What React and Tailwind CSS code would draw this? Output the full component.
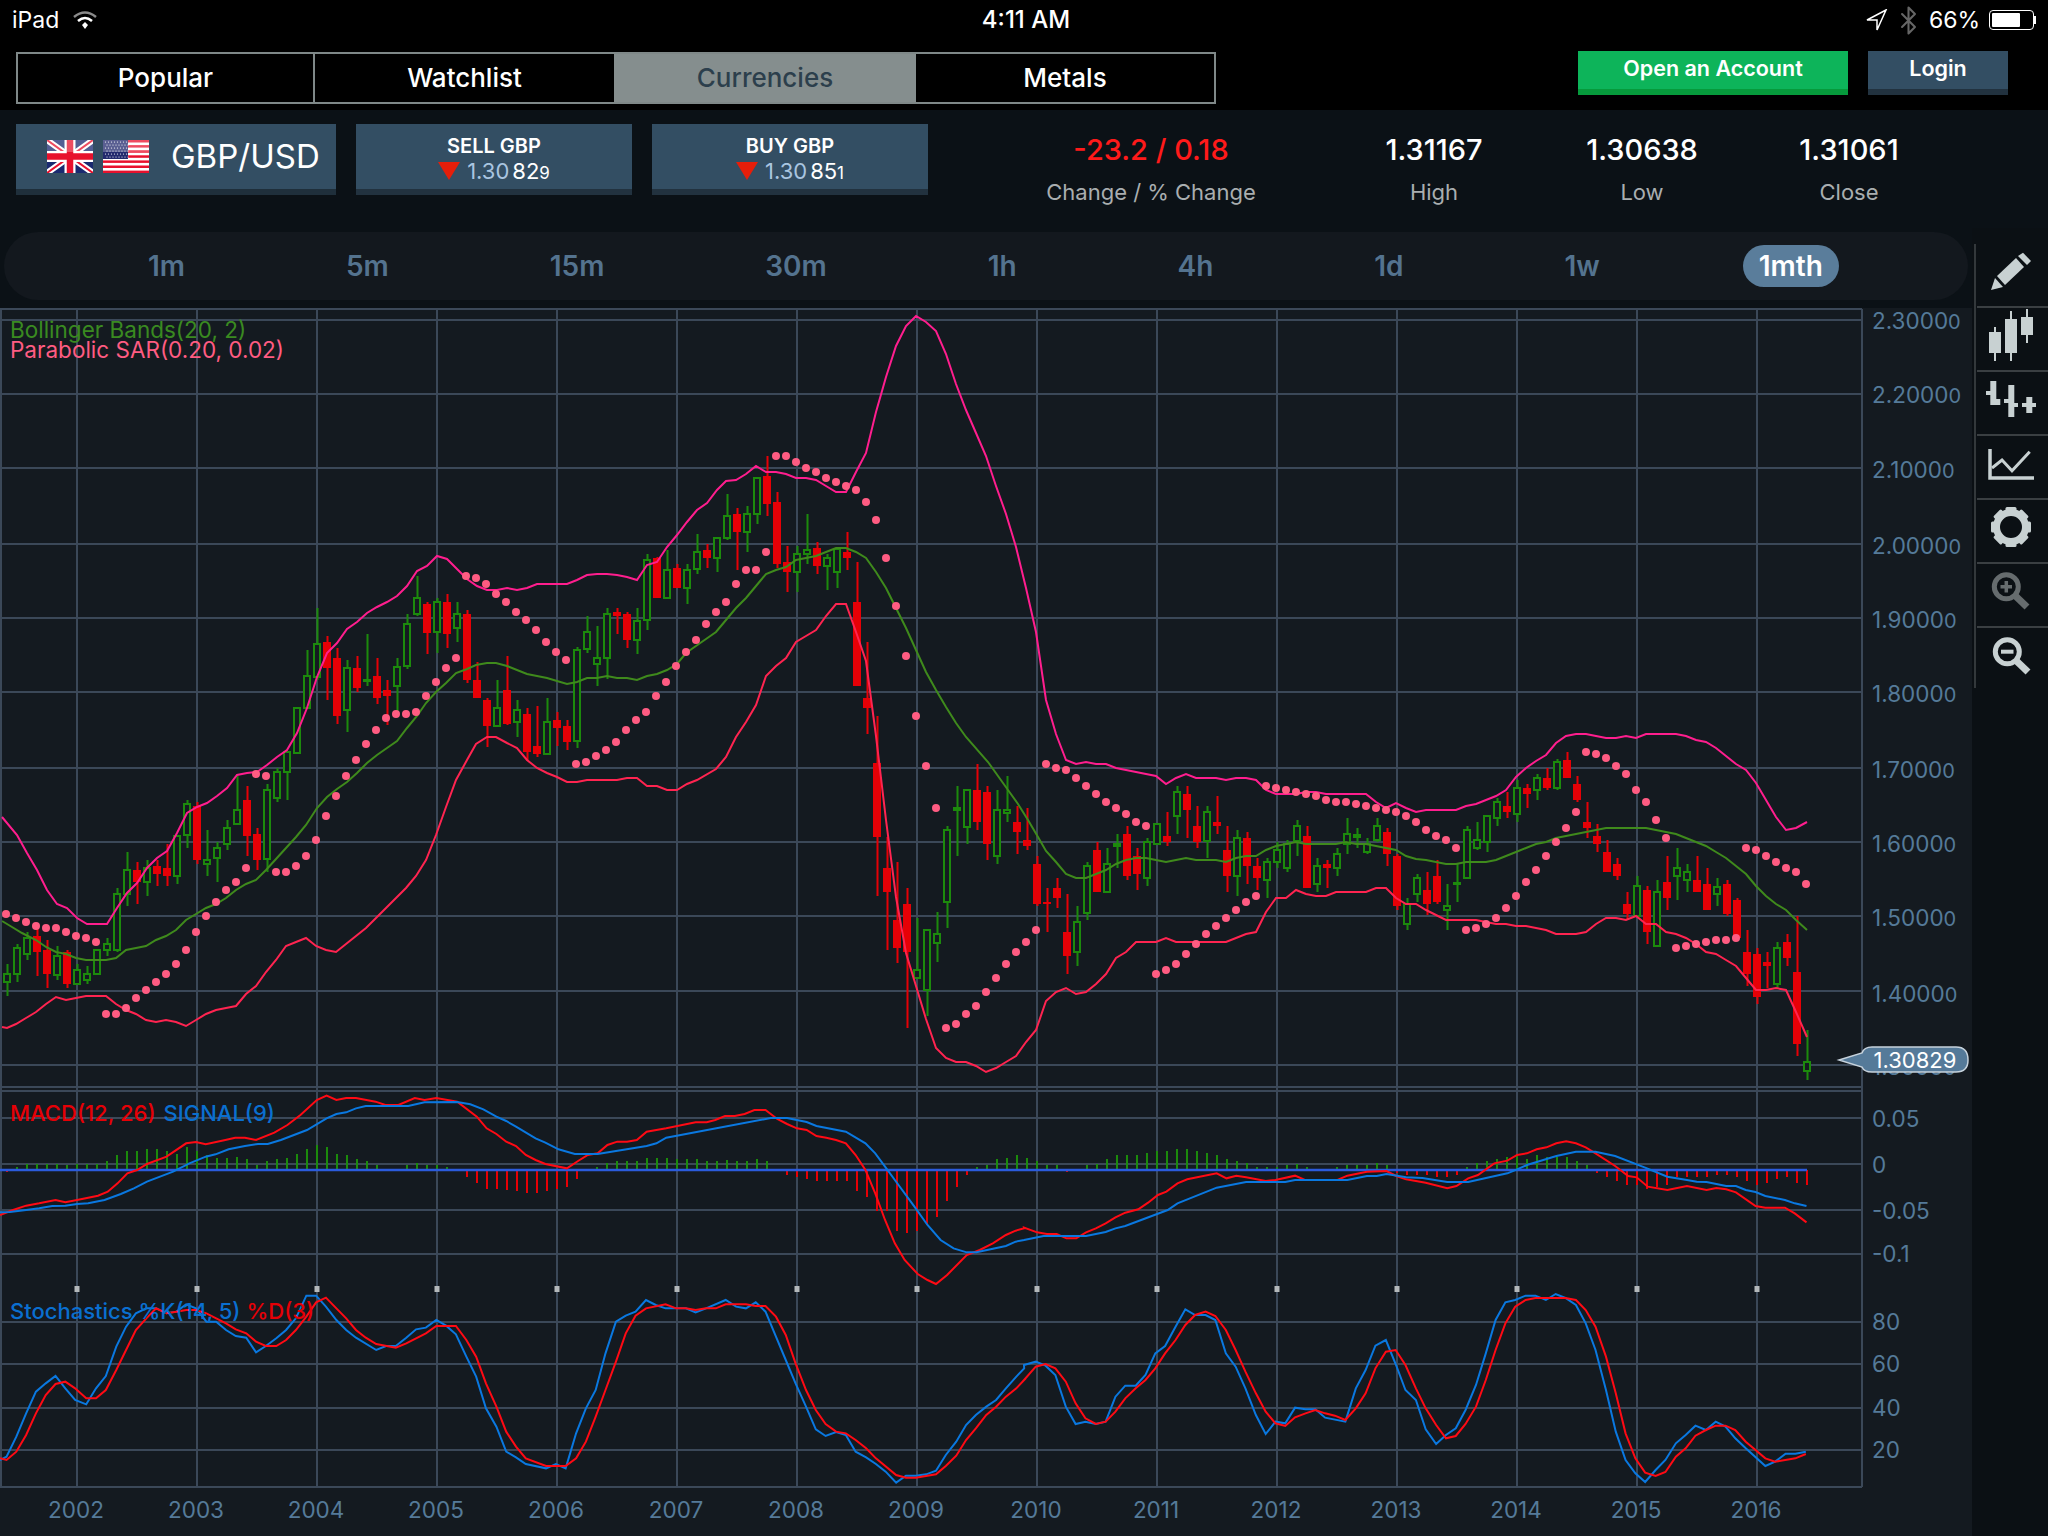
import { Bluetooth } from "lucide-react";

// candles: [red?, wick top, body top, body bottom, wick bottom], one per month, x = 7 + 10 * i
const candles = [
    [0,964,973,983,996],[0,944,947,975,982],[0,932,937,955,960],[1,929,936,952,976],[1,940,950,974,988],
    [0,946,955,976,980],[1,950,952,984,988],[0,964,969,985,985],[0,966,973,981,984],[0,949,949,975,975],
    [0,938,943,951,956],[0,888,893,951,952],[0,852,869,895,906],[1,862,870,882,904],[0,860,867,883,896],
    [1,860,866,874,886],[1,844,868,876,886],[0,835,835,877,884],[0,800,803,836,848],[1,802,806,860,864],
    [0,830,859,865,876],[0,842,847,859,882],[0,820,827,845,850],[0,776,809,825,825],[1,786,800,836,856],
    [1,828,834,860,870],[0,784,789,860,872],[0,768,771,799,802],[0,751,751,773,800],[0,707,707,754,754],
    [0,650,675,709,709],[0,608,643,678,680],[1,636,642,668,700],[1,648,658,716,724],[0,660,667,711,732],
    [1,656,668,688,692],[0,634,679,681,686],[1,658,676,698,704],[1,680,690,696,725],[0,658,666,687,712],
    [0,614,623,667,669],[0,576,597,615,616],[1,602,604,633,654],[0,598,601,633,653],[1,594,602,634,648],
    [0,602,613,629,642],[1,610,614,680,683],[1,662,680,698,698],[1,698,700,726,747],[0,680,707,727,727],
    [1,656,690,724,725],[0,700,709,723,737],[1,708,714,752,761],[1,706,746,754,757],[0,698,721,755,755],
    [1,712,720,728,746],[1,720,726,742,750],[0,647,649,742,748],[0,616,631,650,653],[0,626,657,665,686],
    [0,608,613,659,679],[1,608,612,616,634],[1,612,614,640,648],[0,608,620,641,654],[0,554,559,621,630],
    [1,557,558,598,598],[0,550,569,599,599],[1,564,568,588,588],[0,564,569,589,604],[0,534,551,570,574],
    [1,544,550,558,568],[0,537,537,559,572],[0,494,515,539,540],[1,508,514,532,570],[0,506,513,533,552],
    [0,477,477,515,524],[1,456,476,504,516],[1,492,502,564,568],[1,546,562,572,592],[0,546,553,573,592],
    [0,514,549,555,564],[1,542,548,566,574],[0,554,557,567,590],[0,547,548,573,588],[1,532,552,558,570],
    [1,562,602,686,686],[1,642,698,708,734],[1,716,763,837,896],[1,837,868,892,950],[1,862,920,948,963],
    [1,888,904,952,1028],[0,918,969,979,979],[0,929,929,991,1016],[0,912,933,944,962],[0,826,829,903,928],
    [0,786,807,811,856],[0,789,789,828,844],[1,764,790,822,830],[1,786,792,844,860],[0,790,809,857,864],
    [0,776,809,814,822],[1,806,822,832,854],[1,808,840,846,850],[1,856,864,904,906],[1,888,902,904,932],
    [1,878,888,898,908],[1,894,932,956,974],[0,906,921,953,966],[0,862,865,914,920],[1,842,850,892,892],
    [0,848,863,893,893],[0,834,843,847,868],[1,826,834,876,880],[1,848,856,874,890],[0,838,841,879,886],
    [0,823,823,845,845],[1,812,836,842,846],[0,786,791,817,834],[1,786,794,810,838],[1,806,826,842,848],
    [0,806,811,842,858],[1,796,822,826,834],[1,826,850,876,892],[0,830,837,877,896],[1,832,838,866,884],
    [1,858,866,878,890],[0,858,861,881,898],[0,842,849,863,868],[0,840,843,869,872],[0,820,825,842,856],
    [1,826,836,888,888],[0,858,865,885,892],[1,860,864,868,888],[0,848,853,869,876],[0,818,833,845,854],
    [0,828,834,838,848],[0,838,843,853,854],[0,818,825,841,842],[1,828,832,854,866],[1,854,856,906,910],
    [0,898,903,925,930],[0,874,877,895,902],[1,872,890,904,915],[1,860,876,902,904],[0,884,905,911,930],
    [0,863,882,883,902],[0,826,829,879,879],[0,822,839,849,850],[0,815,815,843,852],[0,798,801,819,826],
    [1,792,806,812,818],[0,780,787,815,822],[1,784,788,794,808],[0,774,777,791,800],[1,768,778,788,790],
    [0,759,761,789,790],[1,752,760,778,778],[1,776,784,800,802],[1,802,822,828,838],[1,824,836,844,852],
    [1,840,852,872,872],[1,858,864,876,880],[1,892,904,914,920],[0,876,885,917,917],[1,886,890,932,944],
    [0,880,891,947,947],[1,856,882,898,910],[0,848,867,877,900],[0,864,871,881,892],[1,856,880,892,892],
    [1,868,884,910,910],[0,878,886,895,906],[1,880,884,914,916],[1,898,900,938,938],[1,930,952,974,986],
    [1,948,954,997,1004],[1,952,962,966,988],[0,942,947,985,989],[1,934,942,958,966],[1,916,972,1044,1056],
    [0,1030,1061,1072,1080],
];

const upper = [
    [2,817],[17,835],[27,853],[37,870],[47,890],[57,904],[67,908],[77,918],[87,924],[107,924],[117,908],[127,893],[137,883],[147,868],
    [157,858],[167,851],[177,833],[187,813],[197,807],[207,803],[217,796],[227,788],[237,775],[247,773],[257,772],[267,765],[277,757],
    [287,750],[297,733],[307,708],[317,677],[327,653],[337,643],[347,629],[357,622],[367,613],[377,607],[387,602],[397,596],[407,586],
    [417,571],[427,566],[437,556],[447,559],[457,569],[467,579],[477,586],[487,590],[497,590],[507,588],[517,590],[527,588],[537,584],
    [567,584],[577,580],[587,575],[597,574],[607,574],[617,575],[627,577],[637,580],[647,565],[657,562],[667,547],[677,535],[687,522],
    [697,510],[707,503],[717,490],[726,481],[736,480],[746,474],[756,466],[766,472],[776,472],[786,474],[796,478],[806,478],[816,480],
    [826,486],[836,492],[846,492],[856,472],[866,453],[876,412],[886,377],[896,346],[906,326],[916,316],[926,322],[936,331],[946,354],
    [956,384],[966,410],[976,433],[986,456],[996,486],[1006,514],[1016,547],[1026,588],[1036,632],[1046,700],[1056,734],[1066,760],
    [1076,764],[1086,762],[1096,764],[1106,764],[1116,768],[1126,770],[1136,772],[1146,774],[1156,776],[1166,784],[1176,778],[1186,774],
    [1196,778],[1216,778],[1226,780],[1236,778],[1246,778],[1256,780],[1266,790],[1276,794],[1296,794],[1306,792],[1316,792],[1326,794],
    [1366,794],[1376,802],[1386,808],[1396,803],[1406,808],[1416,812],[1426,810],[1456,810],[1466,806],[1476,804],[1486,800],[1496,796],
    [1506,790],[1516,777],[1526,768],[1536,761],[1546,755],[1556,743],[1566,736],[1576,734],[1586,734],[1596,736],[1606,738],[1616,738],
    [1626,736],[1636,738],[1646,734],[1676,734],[1686,736],[1696,740],[1706,742],[1716,748],[1726,756],[1736,764],[1746,770],[1756,783],
    [1766,800],[1776,817],[1786,830],[1796,828],[1807,822],
];

const middle = [
    [2,921],[12,927],[22,933],[36,940],[46,947],[56,952],[66,954],[76,958],[86,960],[106,960],[116,958],[126,950],[136,948],[146,946],
    [156,940],[166,936],[176,930],[186,920],[196,914],[206,908],[216,904],[226,898],[236,890],[246,884],[256,880],[266,870],[276,859],
    [286,848],[296,837],[306,825],[317,808],[327,797],[337,789],[347,782],[357,773],[367,763],[377,755],[387,748],[397,741],[407,728],
    [417,716],[426,703],[436,692],[446,683],[456,673],[467,669],[476,665],[487,663],[496,663],[507,666],[517,670],[527,674],[537,676],
    [547,678],[557,681],[567,684],[577,682],[587,678],[597,678],[607,676],[617,678],[627,678],[637,680],[647,676],[657,674],[667,670],
    [677,664],[686,653],[696,646],[706,639],[716,632],[726,620],[736,608],[746,598],[756,586],[766,574],[776,570],[786,567],[796,560],
    [806,558],[816,556],[826,552],[836,548],[846,548],[856,552],[866,558],[876,572],[886,588],[896,608],[906,628],[916,650],[926,672],
    [936,690],[946,707],[956,723],[966,737],[988,762],[998,776],[1008,790],[1018,804],[1028,820],[1038,837],[1046,851],[1056,862],
    [1066,874],[1076,878],[1086,878],[1096,874],[1106,870],[1116,864],[1126,860],[1136,858],[1146,858],[1156,860],[1166,862],[1176,860],
    [1186,858],[1196,860],[1216,860],[1226,862],[1236,858],[1246,856],[1256,856],[1266,850],[1276,846],[1286,844],[1296,842],[1306,844],
    [1336,844],[1346,842],[1356,844],[1366,844],[1376,846],[1386,848],[1396,850],[1406,856],[1416,859],[1426,860],[1436,862],[1446,864],
    [1456,864],[1466,862],[1486,862],[1496,860],[1506,856],[1516,852],[1526,848],[1536,844],[1546,842],[1556,838],[1566,836],[1576,834],
    [1586,832],[1596,830],[1606,828],[1646,828],[1656,830],[1666,832],[1676,834],[1686,838],[1696,842],[1706,846],[1716,852],[1726,858],
    [1736,866],[1746,874],[1756,886],[1766,896],[1776,904],[1786,910],[1796,920],[1807,930],
];

const lower = [
    [2,1027],[7,1028],[16,1024],[26,1018],[36,1012],[46,1004],[56,997],[66,1000],[76,998],[86,996],[106,996],[116,1004],[126,1010],
    [136,1014],[146,1020],[156,1022],[166,1020],[176,1022],[186,1026],[196,1020],[206,1014],[216,1010],[226,1008],[236,1006],[246,994],
    [256,986],[266,972],[276,960],[286,946],[296,942],[306,938],[316,946],[326,950],[336,952],[346,944],[356,936],[366,928],[376,918],
    [386,908],[396,898],[406,888],[416,876],[426,860],[436,835],[446,807],[456,780],[467,760],[476,744],[487,737],[496,737],[507,743],
    [517,748],[527,760],[537,768],[547,773],[557,777],[567,782],[577,782],[587,780],[617,780],[627,778],[637,778],[647,786],[657,786],
    [667,790],[677,790],[687,784],[697,780],[716,769],[726,757],[736,737],[746,722],[756,705],[766,676],[776,666],[786,658],[796,642],
    [806,636],[816,630],[826,616],[836,604],[846,604],[856,632],[866,661],[876,736],[886,820],[896,897],[906,953],[916,986],[926,1019],
    [936,1048],[946,1058],[956,1062],[966,1062],[976,1066],[986,1072],[996,1068],[1006,1062],[1016,1056],[1026,1042],[1036,1030],
    [1046,1001],[1056,992],[1066,988],[1076,994],[1086,992],[1096,984],[1106,974],[1116,958],[1126,952],[1136,942],[1156,942],[1166,938],
    [1176,942],[1226,942],[1236,938],[1246,934],[1256,932],[1266,912],[1276,898],[1286,898],[1296,890],[1306,894],[1316,896],[1326,896],
    [1336,892],[1366,892],[1376,888],[1386,888],[1396,898],[1406,904],[1416,904],[1426,910],[1436,915],[1446,920],[1476,920],[1486,922],
    [1496,924],[1506,924],[1516,926],[1526,926],[1536,928],[1546,930],[1556,934],[1576,934],[1586,932],[1596,924],[1606,918],[1616,918],
    [1626,920],[1636,916],[1646,924],[1656,924],[1666,932],[1676,934],[1686,938],[1696,944],[1706,952],[1716,954],[1726,960],[1736,966],
    [1746,978],[1756,990],[1766,990],[1776,988],[1786,990],[1796,1012],[1807,1037],
];

// parabolic sar, x = 6 + 10 * i
const sar = [
    914,918,922,926,928,928,932,936,938,942,
    1014,1014,1008,998,990,982,974,964,950,932,916,902,890,882,868,774,776,872,872,866,856,840,
    816,796,776,760,744,730,718,714,714,712,696,682,668,658,
    576,578,584,594,602,612,620,630,642,652,660,
    764,762,756,750,742,730,720,712,696,682,666,652,640,624,612,602,584,570,570,552,
    456,456,462,468,472,478,482,486,490,502,520,558,606,656,716,766,808,
    1028,1024,1014,1006,992,978,964,952,942,930,
    764,768,770,778,786,794,802,808,814,822,826,
    974,970,964,954,944,934,926,918,910,902,896,
    786,788,790,792,794,796,800,802,802,804,806,808,810,812,816,822,830,836,840,848,
    930,928,924,918,908,896,882,870,856,842,828,812,
    752,754,758,766,774,790,802,820,838,
    948,946,944,942,940,940,938,
    848,850,856,862,868,872,884,
];

// macd histogram in px from the zero line, same x as the candles
const hist = [
    -2,3,6,6,6,6,5,6,6,6,9,15,19,19,21,21,19,16,23,19,15,12,12,13,11,5,9,11,12,16,21,25,23,16,15,11,9,5,0,0,
    5,7,5,5,3,0,-7,-13,-19,-19,-20,-21,-23,-23,-21,-19,-17,-9,0,3,7,9,9,9,12,12,12,11,11,11,9,9,10,9,9,11,9,0,
    -5,-7,-9,-11,-11,-11,-11,-21,-27,-41,-41,-61,-63,-61,-55,-47,-31,-17,-5,3,5,11,12,15,12,9,5,5,-2,0,5,6,11,15,
    15,15,17,19,19,21,21,19,17,15,11,9,7,3,3,3,5,6,3,0,0,3,5,5,5,7,5,-3,-5,-5,-5,-7,-7,-5,3,7,9,11,13,15,11,15,13,13,13,9,5,
    -3,-7,-11,-15,-15,-19,-17,-15,-7,-7,-7,-7,-5,-5,-7,-11,-15,-13,-9,-7,-13,-15,
];

const macdA = [[0,465],[20,450],[40,437],[60,430],[85,420],[100,427],[118,420],[150,407],[165,395],[180,370],[195,340],[210,330],[225,312],[255,290],[285,250],[300,246],[315,253],[345,240],[360,233],[375,233],[392,240],[420,218],[440,195],[460,165],[485,120],[500,107],[515,120],[530,114],[545,114],[575,125],[590,135],[610,135],[635,114],[650,120],[668,114],[700,125],[730,170],[745,205],[760,222],[775,245],[790,258],[805,285],[820,300],[835,312],[868,325],[885,303],[900,285],[915,280],[930,255],[945,245],[960,245],[975,240],[990,215],[1020,205],[1065,187],[1082,187],[1095,180],[1110,168],[1125,168],[1140,162],[1155,150],[1172,150],[1190,177],[1205,192],[1220,205],[1235,210],[1250,228],[1265,233],[1280,240],[1295,250],[1310,285],[1325,330],[1340,400],[1355,480],[1370,550],[1385,600],[1405,642],[1420,660],[1433,672],[1450,645],[1480,585],[1500,570],[1520,550],[1540,525],[1555,512],[1568,505]];
const macdB = [[0,503],[20,517],[35,522],[50,522],[65,535],[80,535],[95,517],[110,505],[125,490],[140,472],[155,458],[175,448],[190,428],[205,405],[218,395],[235,370],[250,358],[265,352],[295,340],[310,355],[325,347],[340,352],[370,363],[385,360],[415,347],[430,360],[480,360],[495,347],[525,335],[555,333],[570,348],[585,358],[615,368],[648,385],[662,378],[680,355],[695,345],[720,310],[740,302],[755,285],[770,280],[785,268],[800,262],[815,250],[830,244],[845,250],[860,262],[875,280],[905,318],[925,348],[938,352],[955,380],[985,390],[1015,378],[1045,390],[1060,384],[1075,388],[1090,397],[1120,438],[1135,443],[1165,443],[1180,460],[1198,487]];
const signalA = [[0,457],[15,456],[40,450],[60,445],[80,438],[100,437],[118,432],[135,430],[160,420],[185,402],[205,385],[225,365],[265,335],[290,310],[315,290],[330,283],[350,268],[375,258],[395,252],[410,252],[430,240],[470,210],[500,175],[515,162],[530,157],[545,145],[560,138],[625,138],[650,127],[700,126],[720,133],[740,148],[760,170],[775,183],[790,200],[820,235],[835,248],[855,268],[880,282],[915,282],[990,258],[1005,250],[1020,233],[1180,174],[1205,174],[1235,186],[1250,198],[1295,215],[1325,250],[1340,280],[1355,320],[1370,360],[1400,440],[1420,495],[1440,540],[1460,565],[1480,577],[1495,577],[1540,558],[1555,545],[1568,540]];
const signalB = [[0,540],[30,528],[95,528],[125,516],[140,505],[155,498],[220,450],[235,430],[295,383],[340,366],[400,366],[415,360],[495,360],[525,348],[540,348],[555,342],[585,352],[610,354],[648,366],[680,366],[740,340],[755,328],[770,315],[785,306],[815,288],[845,275],[875,275],[905,288],[950,322],[985,350],[1015,360],[1030,365],[1045,366],[1075,378],[1090,378],[1105,390],[1120,396],[1135,408],[1165,420],[1180,430],[1198,438]];
const stochKA = [[0,1200],[10,1190],[25,1130],[40,1060],[55,995],[70,970],[85,948],[100,985],[115,1020],[132,1033],[147,985],[162,948],[178,860],[193,800],[208,760],[224,745],[239,745],[255,760],[270,755],[285,733],[300,745],[316,785],[331,785],[346,810],[361,828],[377,833],[392,877],[407,858],[423,835],[438,810],[453,775],[469,707],[484,707],[499,740],[515,780],[530,810],[545,833],[576,870],[591,858],[606,858],[622,833],[637,808],[652,803],[668,780],[683,797],[698,823],[714,890],[729,950],[744,1045],[760,1100],[775,1175],[790,1192],[805,1212],[836,1225],[851,1212],[866,1225],[882,1120],[897,1045],[912,990],[927,880],[943,785],[958,767],[973,755],[989,720],[1004,735],[1019,745],[1050,745],[1065,757],[1081,745],[1111,720],[1127,740],[1142,745],[1157,727],[1172,755],[1188,830],[1203,900],[1218,970],[1234,1040],[1249,1108],[1264,1128],[1280,1116],[1295,1125],[1310,1175],[1326,1192],[1341,1212],[1356,1235],[1372,1268],[1387,1247],[1402,1247],[1418,1243],[1433,1232],[1448,1185],[1464,1145],[1479,1095],[1494,1065],[1510,1040],[1525,1020],[1540,985],[1556,950],[1568,925]];
const stochDA = [[0,1195],[10,1200],[25,1175],[40,1125],[55,1060],[70,1005],[85,972],[100,965],[115,985],[132,1015],[147,1015],[162,990],[178,930],[193,870],[208,810],[224,775],[239,745],[255,760],[270,755],[285,750],[300,750],[316,760],[331,775],[346,790],[361,808],[377,820],[392,845],[407,858],[423,858],[438,840],[453,810],[469,770],[484,727],[499,713],[515,745],[530,775],[545,810],[560,833],[576,852],[606,863],[622,850],[652,820],[668,798],[698,798],[714,840],[729,890],[744,970],[760,1040],[775,1115],[790,1160],[805,1195],[836,1218],[866,1218],[882,1195],[897,1145],[912,1070],[927,990],[943,905],[958,820],[973,767],[989,745],[1019,733],[1035,745],[1050,745],[1065,750],[1081,745],[1096,745],[1111,733],[1142,733],[1157,738],[1172,738],[1188,770],[1203,825],[1218,910],[1234,990],[1249,1050],[1264,1092],[1280,1115],[1295,1120],[1310,1140],[1326,1165],[1341,1195],[1372,1245],[1387,1253],[1402,1253],[1433,1243],[1448,1218],[1464,1187],[1479,1140],[1494,1105],[1510,1065],[1525,1040],[1540,1010],[1556,985],[1568,960]];
const stochKB = [[0,915],[18,905],[33,917],[48,945],[64,1040],[79,1092],[94,1085],[110,1092],[125,1085],[140,1010],[155,977],[171,977],[186,945],[201,880],[216,858],[232,800],[247,748],[262,765],[278,765],[293,780],[309,880],[324,920],[339,985],[355,1065],[370,1122],[385,1085],[400,1090],[415,1043],[431,1048],[446,1048],[461,1073],[492,1085],[508,985],[523,930],[538,857],[554,840],[569,912],[584,990],[600,1020],[615,1108],[631,1152],[646,1125],[661,1105],[676,1050],[692,975],[707,880],[722,780],[737,727],[752,720],[768,707],[783,707],[799,720],[814,702],[829,714],[845,735],[860,790],[875,870],[891,990],[906,1115],[921,1200],[936,1240],[951,1266],[967,1230],[982,1200],[998,1150],[1013,1125],[1028,1097],[1044,1110],[1059,1085],[1074,1100],[1089,1135],[1105,1165],[1135,1218],[1150,1205],[1166,1181],[1181,1181],[1197,1175]];
const stochDB = [[0,960],[18,920],[33,912],[48,925],[64,965],[79,1030],[94,1075],[110,1092],[125,1085],[140,1055],[155,1015],[171,985],[186,960],[201,925],[216,880],[232,840],[247,795],[262,765],[278,755],[293,768],[309,810],[324,870],[339,935],[355,1000],[370,1055],[385,1090],[400,1098],[415,1072],[431,1060],[446,1050],[461,1060],[476,1067],[492,1080],[508,1045],[523,1000],[538,925],[554,875],[569,870],[584,915],[600,985],[615,1045],[631,1095],[646,1135],[661,1128],[676,1092],[692,1040],[707,960],[722,870],[737,790],[752,740],[768,720],[783,714],[829,714],[845,720],[860,750],[875,800],[891,890],[906,1000],[921,1120],[936,1195],[951,1238],[967,1248],[982,1236],[998,1190],[1013,1165],[1028,1127],[1044,1110],[1059,1097],[1074,1097],[1089,1110],[1105,1145],[1120,1170],[1135,1195],[1150,1205],[1181,1195],[1197,1182]];

const leftPart = ([x, y]) => [x / 1.531, 1060 + y / 3];
const rightPart = ([x, y]) => [1024 + x / 1.531, 1060 + y / 3];
const join = (a, b) => [...a.map(leftPart), ...b.map(rightPart)].map((p) => p.join(",")).join(" ");
const line = (a) => a.map((p) => p.join(",")).join(" ");

const years = [2002, 2003, 2004, 2005, 2006, 2007, 2008, 2009, 2010, 2011, 2012, 2013, 2014, 2015, 2016];
const gridX = years.map((y, i) => 77 + 120 * i);
const gridY = [320, 394, 468, 544, 618, 692, 768, 842, 916, 991, 1065, 1087, 1091, 1118, 1164, 1210, 1254, 1322, 1364, 1408, 1450, 1487];
const prices = [["2.3000", 321], ["2.2000", 395], ["2.1000", 470], ["2.0000", 546], ["1.9000", 620], ["1.8000", 694], ["1.7000", 770], ["1.6000", 844], ["1.5000", 918], ["1.4000", 994], ["1.3000", 1067]];
const lowerLabels = [["0.05", 1119], ["0", 1165], ["-0.05", 1211], ["-0.1", 1254], ["80", 1322], ["60", 1364], ["40", 1408], ["20", 1450]];

function Chart() {
    return (
        <svg viewBox="0 308 1972 1228" className="block w-[1972px] h-[1228px] bg-[#141a20]">
            <g stroke="#3b4858" strokeWidth="2">
                <line x1="1" y1="309" x2="1" y2="1487" />
                <line x1="0" y1="309" x2="1862" y2="309" />
                <line x1="1862" y1="309" x2="1862" y2="1487" />
                {gridX.map((x) => <line key={x} x1={x} y1="309" x2={x} y2="1487" />)}
                {gridY.map((y) => <line key={y} x1="0" y1={y} x2="1862" y2={y} />)}
            </g>

            {gridX.map((x) => <rect key={x} x={x - 2.5} y="1286" width="5" height="6" fill="#b4b8ba" />)}

            {candles.map((c, i) => {
                const x = 7 + 10 * i;
                const color = c[0] ? "#e60006" : "#1c8a0c";
                return (
                    <g key={i} stroke={color} strokeWidth="2">
                        <line x1={x + 0.5} y1={c[1]} x2={x + 0.5} y2={c[4]} />
                        {c[0]
                            ? <rect x={x - 4} y={c[2]} width="8" height={Math.max(c[3] - c[2], 2)} fill={color} stroke="none" />
                            : <rect x={x - 3} y={c[2] + 1} width="6" height={Math.max(c[3] - c[2] - 2, 1)} fill="#141a20" />}
                    </g>
                );
            })}

            <polyline points={line(middle)} fill="none" stroke="#3f8a1c" strokeWidth="2" />
            <polyline points={line(upper)} fill="none" stroke="#ff1e8e" strokeWidth="2" />
            <polyline points={line(lower)} fill="none" stroke="#ff2450" strokeWidth="2" />
            {sar.map((y, i) => <circle key={i} cx={6 + 10 * i} cy={y} r="4" fill="#ff5c82" />)}

            {hist.map((h, i) => {
                if (h === 0) return null;
                const x = 7 + 10 * i;
                return <line key={i} x1={x} y1="1170" x2={x} y2={1170 - h} stroke={h > 0 ? "#1c8a0c" : "#e60006"} strokeWidth="2" />;
            })}
            <line x1="0" y1="1170" x2="1807" y2="1170" stroke="#2b5bdc" strokeWidth="2.5" />
            <polyline points={join(macdA, macdB)} fill="none" stroke="#ff0a14" strokeWidth="2" />
            <polyline points={join(signalA, signalB)} fill="none" stroke="#0a78e0" strokeWidth="2" />

            <polyline points={join(stochKA, stochKB)} fill="none" stroke="#0a78e0" strokeWidth="2" />
            <polyline points={join(stochDA, stochDB)} fill="none" stroke="#ff0a14" strokeWidth="2" />

            <g className="text-[22.5px]">
                <text x="10" y="338" className="fill-[#3a8a20]">Bollinger Bands(20, 2)</text>
                <text x="10" y="358" className="fill-[#ff5c82]">Parabolic SAR(0.20, 0.02)</text>
                <text x="10" y="1121" className="text-[22px] font-medium">
                    <tspan className="fill-[#e60006]">MACD(12, 26)</tspan>
                    <tspan dx="8" className="fill-[#0a6fd0]">SIGNAL(9)</tspan>
                </text>
                <text x="10" y="1319" className="text-[22px] font-medium">
                    <tspan className="fill-[#0a6fd0]">Stochastics %K(14, 5)</tspan>
                    <tspan dx="6" className="fill-[#e60006]">%D(3)</tspan>
                </text>
            </g>

            <g className="text-[22.5px] fill-[#557a99]">
                {prices.map(([p, y]) => (
                    <text key={p} x="1872" y={y + 8}>{p}<tspan className="text-[20px]">0</tspan></text>
                ))}
                {lowerLabels.map(([p, y]) => <text key={p} x="1872" y={y + 8}>{p}</text>)}
                {years.map((y, i) => <text key={y} x={76 + 120 * i} y="1518" textAnchor="middle">{y}</text>)}
            </g>

            <path d="M1839 1060 L1862 1053 Q1864 1047 1872 1047 L1956 1047 Q1968 1047 1968 1060 Q1968 1072 1956 1072 L1872 1072 Q1864 1072 1862 1067 Z" fill="#557a99" stroke="#c6d2dc" strokeWidth="1.5" />
            <text x="1915" y="1068" textAnchor="middle" className="text-[22px] fill-white">1.30829</text>
        </svg>
    );
}

function UkFlag() {
    return (
        <svg viewBox="0 0 46 33" className="w-[46px] h-[33px]">
            <rect width="46" height="33" fill="#1a2a70" />
            <path d="M0 0 L46 33 M46 0 L0 33" stroke="#fff" strokeWidth="6" />
            <path d="M0 0 L46 33 M46 0 L0 33" stroke="#e8112d" strokeWidth="2" />
            <path d="M23 0 V33 M0 16.5 H46" stroke="#fff" strokeWidth="11" />
            <path d="M23 0 V33 M0 16.5 H46" stroke="#e8112d" strokeWidth="6.5" />
            <rect width="46" height="12" fill="#fff" opacity="0.25" />
        </svg>
    );
}

function UsFlag() {
    const stripes = [0, 1, 2, 3, 4, 5, 6];
    const dots = [];
    for (let r = 0; r < 6; r++) for (let c = 0; c < 8; c++) dots.push([2.5 + c * 3 + (r % 2) * 1.5, 2 + r * 3]);
    return (
        <svg viewBox="0 0 46 33" className="w-[46px] h-[33px]">
            <rect width="46" height="33" fill="#fff" />
            {stripes.map((s) => <rect key={s} y={s * 5.1} width="46" height="2.5" fill="#e8112d" />)}
            <rect width="25" height="19" fill="#232a6e" />
            {dots.map(([x, y], i) => <circle key={i} cx={x} cy={y} r="0.6" fill="#fff" />)}
            <rect width="46" height="12" fill="#fff" opacity="0.25" />
        </svg>
    );
}

function StatusBar() {
    return (
        <div className="h-[40px] mb-3 grid grid-cols-3 items-center px-3 text-white text-[23px]">
            <div className="flex items-center gap-[13px]">
                <span>iPad</span>
                <svg viewBox="0 0 26 20" className="w-[26px] h-[20px]" fill="none" stroke="#fff" strokeWidth="2.5">
                    <path d="M2 7 Q13 -2 24 7" stroke="#8a8a8a" />
                    <path d="M6 11 Q13 5 20 11" />
                    <path d="M10 15 L13 12 L16 15 L13 19 Z" fill="#fff" stroke="none" />
                </svg>
            </div>
            <span className="text-center font-medium text-[24px] pl-1">4:11 AM</span>
            <div className="flex items-center justify-end gap-[9px]">
                <svg viewBox="0 0 22 22" className="w-[22px] h-[22px]" fill="none" stroke="#fff" strokeWidth="1.5">
                    <path d="M20 1 L1 11 L11 11 L11 21 Z" />
                </svg>
                <Bluetooth className="w-[31px] h-[31px] -mx-[4px] text-[#666]" strokeWidth={1.6} />
                <span>66%</span>
                <div className="flex items-center">
                    <div className="w-[45px] h-[20px] border border-white rounded-[4px] p-[2px]">
                        <div className="w-[28px] h-full bg-white rounded-[1px]" />
                    </div>
                    <div className="w-[2px] h-[8px] bg-white" />
                </div>
            </div>
        </div>
    );
}

function NavBar() {
    return (
        <div className="h-[58px] flex px-4 items-start">
            <div className="flex w-[1200px] h-[52px] pb-0 border-2 border-[#7f8888] text-[26px] font-medium text-white">
                <div className="w-[297px] pb-[2px] flex items-center justify-center border-r-2 border-[#7f8888]">Popular</div>
                <div className="w-[299px] pb-[2px] flex items-center justify-center">Watchlist</div>
                <div className="w-[302px] pb-[2px] flex items-center justify-center bg-[#858e8e] text-[#2c3f4c]">Currencies</div>
                <div className="flex-1 pb-[2px] flex items-center justify-center">Metals</div>
            </div>
            <button className="ml-auto mr-5 -mt-px pb-[3px] w-[270px] h-[44px] bg-[#0db45a] border-b-[6px] border-[#069a3c] text-white text-[21.5px] font-semibold">Open an Account</button>
            <button className="-mt-px mr-6 pb-[3px] w-[140px] h-[44px] bg-[#334e63] border-b-[6px] border-[#22323f] text-white text-[21.5px] font-semibold">Login</button>
        </div>
    );
}

function Price({ pre, big, small }) {
    return (
        <div className="flex items-center justify-center gap-[7px] h-[24px]">
            <svg viewBox="0 0 22 18" className="w-[22px] h-[18px]"><path d="M0 0 H22 L11 18 Z" fill="#e61e0a" /></svg>
            <div className="text-[22px] leading-none">
                <span className="text-[#a9c5e0]">{pre}</span>
                <span className="text-white ml-[3px]">{big}</span>
                <span className="text-white text-[17px]">{small}</span>
            </div>
        </div>
    );
}

function TradeButton({ label, pre, big, small }) {
    return (
        <div className="w-[276px] h-[71px] pt-[3px] bg-[#334e63] border-b-[6px] border-[#22323f] flex flex-col items-center justify-center text-white">
            <div className="text-[20px] font-semibold leading-[26px]">{label}</div>
            <Price pre={pre} big={big} small={small} />
        </div>
    );
}

function Stat({ value, label, width, red }) {
    return (
        <div className={`${width} text-center`}>
            <div className={`text-[29px] font-medium leading-[38px] ${red ? "text-[#ff1a1a]" : "text-white"}`}>{value}</div>
            <div className="text-[22px] leading-[32px] mt-[7px] text-[#a9aeb0]">{label}</div>
        </div>
    );
}

function QuoteBar() {
    return (
        <div className="h-[118px] bg-[#0b1116] flex items-start pt-[14px] pl-4">
            <div className="w-[320px] h-[71px] bg-[#334e63] border-b-[6px] border-[#1f2f3b] flex items-center pl-[31px] gap-[10px] text-white">
                <UkFlag />
                <UsFlag />
                <span className="text-[33px] ml-[12px]">GBP/USD</span>
            </div>
            <div className="ml-5"><TradeButton label="SELL GBP" pre="1.30" big="82" small="9" /></div>
            <div className="ml-5"><TradeButton label="BUY GBP" pre="1.30" big="85" small="1" /></div>
            <div className="ml-[72px] flex pt-[7px]">
                <Stat value="-23.2 / 0.18" label="Change / % Change" width="w-[302px]" red />
                <Stat value="1.31167" label="High" width="w-[264px]" />
                <Stat value="1.30638" label="Low" width="w-[152px]" />
                <Stat value="1.31061" label="Close" width="w-[262px]" />
            </div>
        </div>
    );
}

function Timeframes() {
    const items = ["1m", "5m", "15m", "30m", "1h", "4h", "1d", "1w"];
    return (
        <div className="h-[80px] pt-1 pb-2 pl-1 pr-1 bg-[#0b1116]">
            <div className="h-[68px] rounded-full bg-[#13181e] flex items-center justify-between pl-[144px] pr-[129px] text-[28px] font-semibold text-[#54738f]">
                {items.map((t) => <span key={t}>{t}</span>)}
                <span className="px-[16px] -ml-[18px] h-[42px] rounded-full bg-[#5a7d9b] text-white flex items-center">1mth</span>
            </div>
        </div>
    );
}

const iconColor = "#c8d1d2";

function ToolButton({ children, last }) {
    return (
        <div className={`h-[64px] ${last ? "" : "border-b-2 border-[#3a3f42]"}`}>
            <svg viewBox="0 0 70 62" className="w-[70px] h-[62px]" fill={iconColor}>{children}</svg>
        </div>
    );
}

function Toolbar() {
    const teeth = [0, 45, 90, 135, 180, 225, 270, 315];
    return (
        <div className="w-[76px] bg-[#0b1014] pt-[16px] pl-[2px]">
            <div className="border-l-2 border-[#33383b] pl-[1px] h-[444px]">
                <ToolButton>
                    <path d="M14 46 L18 34 L26 43 Z" />
                    <path d="M20 32 L39 14 L47 23 L28 41 Z" />
                    <path d="M41 12 L46 8.7 L54 17 L50 21 Z" />
                </ToolButton>
                <ToolButton>
                    <path d="M12 24 H17 V19 H19 V24 H24 V45 H19 V53 H17 V45 H12 Z" />
                    <path d="M28 11 H33 V3 H35 V11 H40 V45 H35 V53 H33 V45 H28 Z" />
                    <path d="M44 9 H49 V1 H51 V9 H56 V27 H51 V35 H49 V27 H44 Z" />
                </ToolButton>
                <ToolButton>
                    <path d="M13.3 9 H19.3 V27 H23.3 V33 H13.3 V23 H9 V19 H13.3 Z" />
                    <path d="M31.3 13 H37.3 V31 H41 V35 H37.3 V45 H31.3 V31 H27 V27 H31.3 Z" />
                    <path d="M49.3 25 H55.3 V31 H59 V35 H55.3 V41 H49.3 V35 H45 V31 H49.3 Z" />
                </ToolButton>
                <ToolButton>
                    <path d="M13 13 V42 H57" fill="none" stroke={iconColor} strokeWidth="3.5" />
                    <path d="M15 32 L25 24 L35 34.7 L52.7 15.7" fill="none" stroke={iconColor} strokeWidth="3" />
                </ToolButton>
                <ToolButton>
                    <circle cx="34" cy="27" r="14.5" fill="none" stroke={iconColor} strokeWidth="7" />
                    {teeth.map((a) => <rect key={a} x="28.5" y="7" width="11" height="6" rx="1.5" transform={`rotate(${a} 34 27)`} />)}
                </ToolButton>
                <ToolButton>
                    <circle cx="29.3" cy="22.7" r="12" fill="none" stroke="#666c6e" strokeWidth="5" />
                    <path d="M23.5 22.7 H35 M29.3 17 V28.5" stroke="#666c6e" strokeWidth="3.5" />
                    <path d="M38.5 32 L50 43" stroke="#666c6e" strokeWidth="7" />
                </ToolButton>
                <ToolButton last>
                    <circle cx="30.3" cy="23.7" r="12" fill="none" stroke={iconColor} strokeWidth="5" />
                    <path d="M24 23.7 H36.5" stroke={iconColor} strokeWidth="4" />
                    <path d="M39.5 33 L51 44" stroke={iconColor} strokeWidth="7" />
                </ToolButton>
            </div>
        </div>
    );
}

export default function App() {
    return (
        <div className="w-[2048px] h-[1536px] bg-black overflow-hidden flex flex-col [font-family:Inter,sans-serif]">
            <StatusBar />
            <NavBar />
            <QuoteBar />
            <div className="flex flex-1 bg-[#0b1116]">
                <div className="w-[1972px]">
                    <Timeframes />
                    <Chart />
                </div>
                <Toolbar />
            </div>
        </div>
    );
}
